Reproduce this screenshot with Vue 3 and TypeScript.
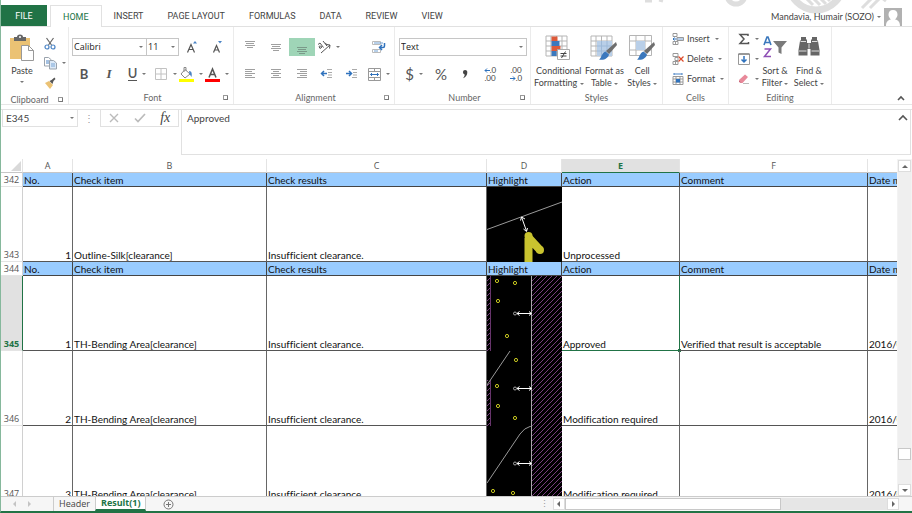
<script setup lang="ts">
import { ref } from 'vue'

interface SheetRow {
  num: number
  kind: 'head' | 'data'
  cells: string[]
  art?: 'silk' | 'bendA' | 'bendB' | 'bendC'
}

const tabs: string[] = ['HOME', 'INSERT', 'PAGE LAYOUT', 'FORMULAS', 'DATA', 'REVIEW', 'VIEW']
const activeTab = ref('HOME')
const columns: string[] = ['A', 'B', 'C', 'D', 'E', 'F', '']
const heads: string[] = ['No.', 'Check item', 'Check results', 'Highlight', 'Action', 'Comment', 'Date modified']

const rows: SheetRow[] = [
  { num: 342, kind: 'head', cells: heads },
  { num: 343, kind: 'data', art: 'silk', cells: ['1', 'Outline-Silk[clearance]', 'Insufficient clearance.', '', 'Unprocessed', '', ''] },
  { num: 344, kind: 'head', cells: heads },
  { num: 345, kind: 'data', art: 'bendA', cells: ['1', 'TH-Bending Area[clearance]', 'Insufficient clearance.', '', 'Approved', 'Verified that result is acceptable', '2016/09/12'] },
  { num: 346, kind: 'data', art: 'bendB', cells: ['2', 'TH-Bending Area[clearance]', 'Insufficient clearance.', '', 'Modification required', '', '2016/09/12'] },
  { num: 347, kind: 'data', art: 'bendC', cells: ['3', 'TH-Bending Area[clearance]', 'Insufficient clearance.', '', 'Modification required', '', '2016/09/12'] },
]

const activeRow = 345
const activeCol = 4
const formula = ref('Approved')
const cellName = ref('E345')
const fontName = ref('Calibri')
const fontSize = ref('11')
const numberFormat = ref('Text')

const vias: Record<string, number[][]> = {
  bendA: [[10, 5], [28, 7], [11, 25], [20, 60]],
  bendB: [[29, 9], [10, 35], [11, 55], [28, 67]],
  bendC: [[6, 65], [26, 67]],
}
</script>

<template>
  <div class="app">
    <svg class="defs" width="0" height="0" aria-hidden="true">
      <defs>
        <pattern id="hatch" width="5" height="5" patternUnits="userSpaceOnUse">
          <path d="M-1 6 6 -1M-1 1 1 -1M4 6 6 4" stroke="#86468c" stroke-width="0.9" />
        </pattern>
        <g id="grid9">
          <path d="M1 2h21v20H1zM1 7h21M1 12h21M1 17h21M6 2v20M11.500 2v20M17 2v20" fill="#fff" stroke="#b5b5b5" />
        </g>
        <g id="brush">
          <path d="M26 8l1 3-8 9-3-3z" fill="#6e6e6e" />
          <path d="M15.500 17.500l3.500 3c-1 4-5 6-10 5 3-2 2-6 6.500-8z" fill="#3b78bd" />
        </g>
      </defs>
    </svg>

    <header class="top">
      <svg class="swirl" viewBox="0 0 280 27" width="280" height="27" aria-hidden="true">
        <g fill="none" stroke="#dedede">
          <circle cx="104" cy="-5" r="9" stroke-width="5" />
          <circle cx="184" cy="-17" r="27" stroke-width="7" />
          <path d="M167 -9l14 14M174 -9l14 14M181 -9l13 13M188 -9l10 10M230 8l10-10M238 8l10-10M250 -2l4 3" stroke-width="3" />
          <path d="M13 1h7M27 0l4 1" stroke-width="3" />
        </g>
      </svg>
      <nav class="tabs">
        <button class="file">FILE</button>
        <button
          v-for="t in tabs"
          :key="t"
          class="tab"
          :class="{ on: t === activeTab }"
          @click="activeTab = t"
        >{{ t }}</button>
      </nav>
      <button class="user">
        <span>Mandavia, Humair (SOZO)</span>
        <i class="caret"></i>
        <svg width="18" height="18" viewBox="0 0 18 18">
          <path d="M0 0h18v18H0z" fill="#b1b1b1" />
          <path d="M9 2c3 0 4.500 2 4.500 4.500S11.500 12 9 12 4.500 9 4.500 6.500 6 2 9 2zM2 18c0-4 2-6 4.500-6.500h5C14 12 16 14 16 18z" fill="#fff" />
        </svg>
      </button>
    </header>

    <section class="ribbon">
      <div class="group clip">
        <div class="body cliprow">
          <button class="big paste">
            <svg width="26" height="28" viewBox="0 0 26 28">
              <path d="M1 4h20v21H1z" fill="#ebc274" />
              <path d="M5 7V3h3a3 2.500 0 0 1 6 0h3v4z" fill="#666" />
              <circle cx="11" cy="3" r="1" fill="#fff" />
              <path d="M12.500 11.500h7l5 5v10h-12z" fill="#fff" stroke="#999" />
              <path d="M19.500 11.500v5h5" fill="none" stroke="#999" />
            </svg>
            <span>Paste</span>
            <i class="caret"></i>
          </button>
          <div class="stack">
            <button class="ic" aria-label="Cut">
              <svg width="12" height="13" viewBox="0 0 12 13" fill="none">
                <path d="M2.500 1l5 7M9.500 1l-5 7" stroke="#666" stroke-width="1.200" />
                <circle cx="3" cy="10" r="2" stroke="#4a83c4" stroke-width="1.200" /><circle cx="9" cy="10" r="2" stroke="#4a83c4" stroke-width="1.200" />
              </svg>
            </button>
            <button class="ic split" aria-label="Copy">
              <svg width="13" height="14" viewBox="0 0 13 14" stroke="#9aa3ad">
                <path d="M.5 1.500h4l3 2.500v6h-7z" fill="#fff" /><path d="M2 5h3M2 7h3" stroke="#4a83c4" />
                <path d="M5.500 4.500h4l3 2.500v6h-7z" fill="#dce9f7" /><path d="M7 8h4M7 10h4" stroke="#7ba6d6" />
              </svg>
              <i class="caret"></i>
            </button>
            <button class="ic" aria-label="Format painter">
              <svg width="12" height="12" viewBox="0 0 12 12">
                <path d="M1 6l4-2 4 4-3 4z" fill="#ebc274" /><path d="M5.500 4l2-1 3-2.500L11.500 2 9.500 4l-1 3z" fill="#555" />
              </svg>
            </button>
          </div>
        </div>
        <footer><span>Clipboard</span><i class="launch"></i></footer>
      </div>

      <div class="group font">
        <div class="body">
          <div class="line">
            <label class="combo name"><input v-model="fontName" aria-label="Font" /><i class="caret"></i></label>
            <label class="combo size"><input v-model="fontSize" aria-label="Font size" /><i class="caret"></i></label>
            <button class="ic w26" aria-label="Increase font size">
              <svg width="12" height="14" viewBox="0 0 12 14"><path d="M1.500 12.500l3.500-8 3.500 8M3 9.500h4" fill="none" stroke="#555" stroke-width="1.200" /><path d="M7 3.500l2-2.500 2 2.500z" fill="#4a83c4" /></svg>
            </button>
            <button class="ic w26" aria-label="Decrease font size">
              <svg width="12" height="14" viewBox="0 0 12 14"><path d="M1.500 12.500l3-7 3 7M3 10h3.500" fill="none" stroke="#555" stroke-width="1.200" /><path d="M6 1l2 2.500L10 1z" fill="#4a83c4" /></svg>
            </button>
          </div>
          <div class="line">
            <button class="ic w24 letter bold">B</button>
            <button class="ic w26 letter ital">I</button>
            <button class="ic w30 split letter"><span class="under">U</span><i class="caret"></i></button>
            <button class="ic w26 split" aria-label="Borders">
              <svg width="14" height="14" viewBox="0 0 14 14"><path d="M1.500 1.500h11v11h-11zM7 1.500v11M1.500 7h11" fill="none" stroke="#c2c2c2" /></svg>
              <i class="caret"></i>
            </button>
            <button class="ic w26 split" aria-label="Fill colour">
              <svg width="15" height="16" viewBox="0 0 15 16"><path d="M6 3.500l5 4.500-5 4-4-4z" fill="#fff" stroke="#888" /><path d="M5 6V1.500h2V5" fill="none" stroke="#888" /><path d="M10 5c3 0 3 3 2.500 6L10.500 8z" fill="#4a83c4" /><path d="M0 13h15v3H0z" fill="#ff0" /></svg>
              <i class="caret"></i>
            </button>
            <button class="ic w26 split" aria-label="Font colour">
              <svg width="15" height="16" viewBox="0 0 15 16"><path d="M4 11.500L7.500 3l3.500 8.500M5.300 8.500h4.400" fill="none" stroke="#555" stroke-width="1.500" /><path d="M0 13h15v3H0z" fill="#f00" /></svg>
              <i class="caret"></i>
            </button>
          </div>
        </div>
        <footer><span>Font</span><i class="launch"></i></footer>
      </div>

      <div class="group align">
        <div class="body">
          <div class="line">
            <button class="ic w26" aria-label="Top align"><svg width="12" height="14" viewBox="0 0 12 14"><path d="M1 1.500h10M2 3.500h8M1 5.500h10M3 7.500h6" stroke="#a0a0a0" /></svg></button>
            <button class="ic w26" aria-label="Middle align"><svg width="12" height="14" viewBox="0 0 12 14"><path d="M1 4.500h10M2 6.500h8M1 8.500h10M3 10.500h6" stroke="#a0a0a0" /></svg></button>
            <button class="ic w26 pressed" aria-label="Bottom align"><svg width="12" height="14" viewBox="0 0 12 14"><path d="M1 7.500h10M2 9.500h8M1 11.500h10M3 13.500h6" stroke="#7a9a89" /></svg></button>
            <button class="ic w26 split" aria-label="Orientation">
              <svg width="14" height="14" viewBox="0 0 14 14" fill="none" stroke="#555"><path d="M4 13l9-8M9.500 4.500L13 5l-.5 3.500" /><path d="M1 4.500l2-1.500 3.500 4.500M2 6.500c1-1 2 0 3 .5l-2 1.500zM6 1l4 5M8 3.500c1-.5 2.500 1 1.500 2" /></svg>
              <i class="caret"></i>
            </button>
            <button class="ic wrap" aria-label="Wrap text">
              <svg width="14" height="14" viewBox="0 0 14 14" fill="none"><path d="M.5 1.500h8v3h-8zM.5 9.500h8v3h-8z" stroke="#bbb" /><path d="M2 3h9M2 11h4" stroke="#6f9fd2" /><path d="M12.500 3v3q0 1.500-1.500 1.500H8M10 5L7.500 7.500 10 10" stroke="#2f72bd" stroke-width="1.500" /></svg>
            </button>
          </div>
          <div class="line">
            <button class="ic w26" aria-label="Align left"><svg width="12" height="12" viewBox="0 0 12 12"><path d="M1 1.500h10M1 3.500h7M1 5.500h10M1 7.500h7M1 9.500h10" stroke="#a0a0a0" /></svg></button>
            <button class="ic w26" aria-label="Centre"><svg width="12" height="12" viewBox="0 0 12 12"><path d="M1 1.500h10M3 3.500h6M1 5.500h10M3 7.500h6M1 9.500h10" stroke="#a0a0a0" /></svg></button>
            <button class="ic w26" aria-label="Align right"><svg width="12" height="12" viewBox="0 0 12 12"><path d="M1 1.500h10M4 3.500h7M1 5.500h10M4 7.500h7M1 9.500h10" stroke="#a0a0a0" /></svg></button>
            <button class="ic w24" aria-label="Decrease indent"><svg width="13" height="12" viewBox="0 0 13 12" fill="none"><path d="M7 1.500h5M8 4.500h4M8 7h4M7 9.500h5" stroke="#aaa" /><path d="M7 5.500H1.500M4 3L1.500 5.500 4 8" stroke="#2f72bd" stroke-width="1.500" /></svg></button>
            <button class="ic w26" aria-label="Increase indent"><svg width="13" height="12" viewBox="0 0 13 12" fill="none"><path d="M7 1.500h5M8 4.500h4M8 7h4M7 9.500h5" stroke="#aaa" /><path d="M1 5.500h5M4 3l2.500 2.500L4 8" stroke="#2f72bd" stroke-width="1.500" /></svg></button>
            <button class="ic w30 split" aria-label="Merge">
              <svg width="13" height="13" viewBox="0 0 13 13" fill="none"><path d="M.5.5h12v12H.5zM.5 3.500h12M.5 9.500h12M6.500.5v3M6.500 9.500v3" stroke="#999" /><path d="M2.500 6.500h8M4 5L2.500 6.500 4 8M9 5l1.500 1.500L9 8" stroke="#2f72bd" /></svg>
              <i class="caret"></i>
            </button>
          </div>
        </div>
        <footer><span>Alignment</span><i class="launch"></i></footer>
      </div>

      <div class="group number">
        <div class="body">
          <div class="line">
            <div class="pick">
              <select v-model="numberFormat" aria-label="Number format"><option>Text</option><option>General</option></select>
              <i class="caret"></i>
            </div>
          </div>
          <div class="line">
            <button class="ic w30 split letter light"><span>$</span><i class="caret"></i></button>
            <button class="ic w24 letter light">%</button>
            <button class="ic w24 letter comma" aria-label="Comma style"><svg width="6" height="10" viewBox="0 0 6 10"><path d="M3 1a2.300 2.300 0 0 1 2.300 2.500C5.300 6 4 8 1 9.200 2.500 7.500 2.800 6.500 2.600 5.500A2.300 2.300 0 0 1 3 1z" fill="#444" /></svg></button>
            <button class="ic w26 dec" aria-label="Increase decimal">
              <span><svg width="6" height="5" viewBox="0 0 6 5"><path d="M6 2.500H1M3 .5l-2 2 2 2" fill="none" stroke="#2f72bd" /></svg>.0</span><span>.00</span>
            </button>
            <button class="ic w26 dec" aria-label="Decrease decimal">
              <span>.00</span><span><svg width="6" height="5" viewBox="0 0 6 5"><path d="M0 2.500h5M3 .5l2 2-2 2" fill="none" stroke="#2f72bd" /></svg>.0</span>
            </button>
          </div>
        </div>
        <footer><span>Number</span><i class="launch"></i></footer>
      </div>

      <div class="group styles">
        <div class="body bigs">
          <button class="big cond">
            <svg width="28" height="28" viewBox="0 0 28 28">
              <use href="#grid9" /><path d="M6.500 2.500h6v4.500h-6zM6.500 12h9v5h-9z" fill="#dd5a3a" /><path d="M6.500 7h8v5h-8zM6.500 17h5v5h-5z" fill="#3b78bd" />
              <path d="M12.500 15.500h12v10h-12z" fill="#fff" stroke="#aaa" /><path d="M15.500 19.500h6M15.500 22h6M20.500 17.500l-4 6.500" stroke="#444" />
            </svg>
            <span>Conditional</span><span>Formatting <i class="caret"></i></span>
          </button>
          <button class="big fmt">
            <svg width="28" height="28" viewBox="0 0 28 28"><use href="#grid9" /><path d="M7 7h15v15H7z" fill="#b9cfe8" /><path d="M7 12h15M7 17h15M11.500 7v15M17 7v15" stroke="#9db9d8" /><use href="#brush" /></svg>
            <span>Format as</span><span>Table <i class="caret"></i></span>
          </button>
          <button class="big cell">
            <svg width="28" height="28" viewBox="0 0 28 28"><path d="M1.500 1.500h22v20h-22zM1.500 7h22M1.500 16h22M8 1.500v20M17 1.500v20" fill="#fff" stroke="#b5b5b5" /><path d="M8 7h9v9H8z" fill="#b9cfe8" /><use href="#brush" /></svg>
            <span>Cell</span><span>Styles <i class="caret"></i></span>
          </button>
        </div>
        <footer><span>Styles</span></footer>
      </div>

      <div class="group cells">
        <div class="body list">
          <button class="item">
            <svg width="12" height="12" viewBox="0 0 12 12"><path d="M1 .5h4v3H1zM1 8.500h5v3H1zM3.500 8.500v3" fill="#fff" stroke="#999" /><path d="M5 4.500h6.500v3H5z" fill="#b9cfe8" stroke="#999" /><path d="M4.500 6H1M2.500 4.500L1 6l1.500 1.500" fill="none" stroke="#2f72bd" /></svg>
            <span>Insert</span><i class="caret"></i>
          </button>
          <button class="item">
            <svg width="12" height="12" viewBox="0 0 12 12"><path d="M1 .5h5v3H1zM1 8.500h5v3H1zM3.500 8.500v3M3 4.500h3v3H3z" fill="#fff" stroke="#999" /><path d="M6.500 3.500l5 5M11.500 3.500l-5 5" stroke="#dd4a2a" stroke-width="1.200" /></svg>
            <span>Delete</span><i class="caret"></i>
          </button>
          <button class="item">
            <svg width="12" height="12" viewBox="0 0 12 12"><path d="M1 3.500h10v8H1zM1 6h10M1 9h10M4 3.500v8M8 3.500v8" fill="#fff" stroke="#999" /><path d="M4 6h4v3.500H4z" fill="#2f72bd" /><path d="M2 1h8M2 0v2M10 0v2" stroke="#4a83c4" /></svg>
            <span>Format</span><i class="caret"></i>
          </button>
        </div>
        <footer><span>Cells</span></footer>
      </div>

      <div class="group editing">
        <div class="body edit">
          <div class="stack">
            <button class="ic split" aria-label="Sum"><svg width="12" height="12" viewBox="0 0 12 12"><path d="M10 3V1.500H2L6 6l-4 4.500h8.500V9" fill="none" stroke="#555" stroke-width="1.500" /></svg><i class="caret"></i></button>
            <button class="ic split" aria-label="Fill"><svg width="12" height="12" viewBox="0 0 12 12" fill="none"><path d="M.5 1h11v10.500H.5z" stroke="#999" /><path d="M.5 1h11" stroke="#666" /><path d="M6 3v6M3.500 6.500L6 9l2.500-2.500" stroke="#2f72bd" stroke-width="1.500" /></svg><i class="caret"></i></button>
            <button class="ic split" aria-label="Clear"><svg width="12" height="12" viewBox="0 0 12 12"><path d="M1 7l6-5.500 3 2.500-5.500 6H3z" fill="#e8899a" /><path d="M1 7l2.500 3H3L1 9z" fill="#c96478" /><path d="M5 10.500h6" stroke="#bbb" /></svg><i class="caret"></i></button>
          </div>
          <button class="big sort">
            <svg width="26" height="28" viewBox="0 0 26 28" fill="none"><path d="M2 11L5 3h1l3 8M3.200 8.500h4.600" stroke="#3b78bd" stroke-width="1.600" /><path d="M2.500 15h6l-6 7.500h6.500" stroke="#8e4fb5" stroke-width="1.500" /><path d="M11 7h14l-5.500 6.500V20l-3-1.500v-5z" fill="#7a7a7a" /></svg>
            <span>Sort &amp;</span><span>Filter <i class="caret"></i></span>
          </button>
          <button class="big find">
            <svg width="24" height="28" viewBox="0 0 24 28" fill="#666"><path d="M4 3h5v2l1 1v3h4V6l1-1V3h5v3l1 1 1.500 9v5.500h-9V15h-3v6.500h-9V16L3 7l1-1z" /><path d="M2 17h7.500M14.500 17H22M3.500 7.500H9M15 7.500h5.500M12 9.500v5" stroke="#ddd" fill="none" /></svg>
            <span>Find &amp;</span><span>Select <i class="caret"></i></span>
          </button>
        </div>
        <footer><span>Editing</span></footer>
      </div>
      <button class="collapse" aria-label="Collapse ribbon"><svg width="8" height="6" viewBox="0 0 8 6"><path d="M1 5l3-3 3 3" fill="none" stroke="#555" stroke-width="1.600" /></svg></button>
    </section>

    <section class="fbar">
      <label class="namebox"><input v-model="cellName" aria-label="Name box" /><i class="caret"></i></label>
      <span class="dots">⋮</span>
      <div class="fx">
        <button aria-label="Cancel"><svg width="10" height="10" viewBox="0 0 10 10"><path d="M1 1l8 8M9 1L1 9" stroke="#bbb" stroke-width="1.400" /></svg></button>
        <button aria-label="Enter"><svg width="12" height="10" viewBox="0 0 12 10"><path d="M1 5.500L4 8.500 11 1" fill="none" stroke="#bbb" stroke-width="1.700" /></svg></button>
        <button class="fxl">fx</button>
      </div>
      <div class="formula">
        <textarea v-model="formula" aria-label="Formula"></textarea>
        <button aria-label="Collapse formula bar"><svg width="10" height="7" viewBox="0 0 10 7"><path d="M1 6l4-4 4 4" fill="none" stroke="#555" stroke-width="1.600" /></svg></button>
      </div>
    </section>

    <main class="sheet">
      <div class="view">
        <table>
          <colgroup>
            <col class="c0" /><col class="ca" /><col class="cb" /><col class="cc" /><col class="cd" /><col class="ce" /><col class="cf" /><col />
          </colgroup>
          <thead>
            <tr>
              <th class="corner"><svg width="10" height="10" viewBox="0 0 10 10"><path d="M10 0v10H0z" fill="#d9d9d9" /></svg></th>
              <th v-for="(c, i) in columns" :key="i" :class="{ cur: i === activeCol }">{{ c }}</th>
            </tr>
          </thead>
          <tbody>
            <tr v-for="r in rows" :key="r.num" :class="r.kind">
              <th :class="{ cur: r.num === activeRow }">{{ r.num }}</th>
              <td v-for="(c, i) in r.cells" :key="i" :class="{ pic: i === 3 && r.art, sel: i === activeCol && r.num === activeRow, num: i === 0 && r.kind === 'data' }">
                <svg v-if="i === 3 && r.art" class="art" viewBox="0 0 75 75" fill="none">
                  <path d="M0 0h75v75H0z" fill="#000" />
                  <template v-if="r.art === 'silk'">
                    <path d="M0 42.500L75 15" stroke="#9a9a9a" />
                    <path d="M41.500 75V51M42 51l11 12" stroke="#c9c32f" stroke-width="8" />
                    <circle cx="41.500" cy="49" r="4" fill="#c9c32f" /><circle cx="53" cy="63" r="4" fill="#c9c32f" />
                    <path d="M34.500 30l5 14M33.500 33.500l1-3.500 3.500 2M36.500 42l3 2.500 1-3.500" stroke="#fff" />
                  </template>
                  <template v-else>
                    <path d="M45 0h30v75H45z" fill="url(#hatch)" />
                    <path v-if="r.art === 'bendA'" d="M0 0h4v75H0z" fill="url(#hatch)" />
                    <path v-if="r.art === 'bendB'" d="M0 29h4v46H0z" fill="url(#hatch)" />
                    <path v-if="r.art === 'bendA'" d="M3.500 0v75" stroke="#67346b" />
                    <path v-if="r.art === 'bendB'" d="M3.500 29v46" stroke="#67346b" />
                    <path v-if="r.art === 'bendB'" d="M0 34L23 0" stroke="#999" />
                    <path v-if="r.art === 'bendC'" d="M0 57L33 8q4-6 11-8" stroke="#999" />
                    <path d="M44.500 0v75" stroke="#aaa" />
                    <circle v-for="(v, k) in vias[r.art!]" :key="k" :cx="v[0]" :cy="v[1]" r="1.600" stroke="#c8c820" />
                    <circle cx="28" cy="37.500" r="1.500" stroke="#ccc" stroke-width="0.800" />
                    <path d="M30 37.500h14M32.500 35.500l-2.500 2 2.500 2M42 35.500l2.500 2-2.500 2" stroke="#fff" />
                  </template>
                </svg>
                <template v-else>{{ c }}</template>
                <i v-if="i === activeCol && r.num === activeRow" class="handle"></i>
              </td>
            </tr>
          </tbody>
        </table>
      </div>
      <div class="vscroll">
        <button aria-label="Scroll up"><i class="tri up"></i></button>
        <div class="vtrack"><div class="vthumb"></div></div>
        <button aria-label="Scroll down"><i class="tri down"></i></button>
      </div>
    </main>

    <footer class="bottom">
      <div class="navs"><button aria-label="Previous sheet"><i class="tri left dim"></i></button><button aria-label="Next sheet"><i class="tri right dim"></i></button></div>
      <button class="stab">Header</button>
      <button class="stab on">Result(1)</button>
      <button class="add" aria-label="New sheet"><svg width="11" height="11" viewBox="0 0 11 11"><circle cx="5.500" cy="5.500" r="4.500" fill="none" stroke="#777" /><path d="M3 5.500h5M5.500 3v5" stroke="#777" /></svg></button>
      <span class="dots hdots">⋮</span>
      <div class="hscroll">
        <button aria-label="Scroll left"><i class="tri left"></i></button>
        <div class="htrack"><div class="hthumb"></div></div>
        <button aria-label="Scroll right"><i class="tri right"></i></button>
      </div>
    </footer>
  </div>
</template>

<style>
body { margin: 0; }
</style>

<style scoped>
* { box-sizing: border-box; }
.app { height: 100vh; display: flex; flex-direction: column; overflow: hidden; background: #fff; color: #444; font: 9px/12px Lato, "Open Sans", sans-serif; font-variant-ligatures: none; border-left: 1px solid #86b89c; border-bottom: 2px solid #217346; }
.defs { position: absolute; }
button, input, select, textarea { font: inherit; color: inherit; background: none; border: 0; padding: 0; margin: 0; outline: 0; min-width: 0; }
button { display: flex; align-items: center; justify-content: center; }
svg { display: block; flex: none; }
.caret { display: inline-block; flex: none; width: 0; height: 0; border: 2px solid transparent; border-top-color: #777; border-bottom: 0; vertical-align: middle; }

.top { position: relative; flex: none; height: 27px; display: flex; align-items: flex-end; justify-content: space-between; border-bottom: 1px solid #e1e1e1; }
.swirl { position: absolute; top: 0; right: 0; }
.tabs { display: flex; align-items: flex-end; font-family: Roboto, Lato, sans-serif; }
.tabs button { height: 21px; padding: 0 12px; }
.tabs .file { background: #217346; color: #fff; width: 46px; margin-right: 3px; }
.tabs .tab.on { color: #217346; border: 1px solid #e1e1e1; border-bottom: 0; background: #fff; height: 22px; margin-bottom: -1px; }
.user { position: relative; gap: 3px; height: 19px; padding-right: 10px; }

.ribbon { flex: none; height: 78px; display: flex; border-bottom: 1px solid #e6e6e6; }
.group { display: flex; flex-direction: column; border-right: 1px solid #ebebeb; flex: none; }
.group .body { flex: 1; }
.group footer { position: relative; height: 12px; text-align: center; color: #666; line-height: 12px; }
.launch { position: absolute; right: 5px; bottom: 4px; width: 5px; height: 5px; border-left: 1px solid #999; border-top: 1px solid #999; }
.launch::after { content: ""; position: absolute; right: 0; bottom: 0; width: 3px; height: 3px; border-right: 1px solid #777; border-bottom: 1px solid #777; }
.clip { width: 68px; }
.clip footer { padding-right: 10px; }
.font { width: 165px; padding-left: 3px; }
.align { width: 161px; padding-left: 3px; }
.number { width: 136px; padding-left: 4px; }
.styles { width: 132px; }
.cells { width: 66px; }
.editing { width: 103px; }
.line { display: flex; height: 26px; align-items: center; }
.line:first-child { height: 28px; margin-top: 6px; }
.ic { height: 18px; }
.w24 { width: 24px; } .w26 { width: 26px; } .w30 { width: 30px; }
.split { gap: 5px; }
.letter { font-size: 13px; color: #555; }
.bold { font-weight: 700; }
.ital { font: italic 700 13px "Liberation Serif", serif; }
.under { border-bottom: 1px solid #555; line-height: 13px; font-weight: 600; }
.light { font-size: 15px; }
.pressed { background: #9fd5b7; }
.wrap { margin-left: 25px; width: 26px; }
.dec { flex-direction: column; font-size: 8px; line-height: 8px; }
.dec span { display: flex; align-items: center; height: 8px; }
.combo, .pick, .namebox { display: flex; align-items: center; border: 1px solid #c6c6c6; height: 18px; padding-right: 3px; color: #222; font-size: 9px; font-family: "Open Sans", sans-serif; }
.combo input { flex: 1; padding-left: 1px; }
.combo.name { width: 75px; } .combo.size { width: 33px; margin-left: -1px; }
.pick { width: 128px; }
.pick select { appearance: none; flex: 1; height: 16px; padding-left: 1px; }
.big { flex-direction: column; justify-content: flex-start; }
.big span { line-height: 12px; white-space: nowrap; }
.bigs { display: flex; padding-top: 7px; }
.cond { width: 56px; } .fmt { width: 36px; } .cell { width: 40px; }
.bigs .big svg, .edit .big svg { margin-bottom: 3px; }
.cliprow { display: flex; padding: 7px 0 0 8px; }
.paste svg { margin-bottom: 3px; } .paste .caret { margin-top: 4px; }
.cliprow .stack { margin-left: 9px; }
.stack { display: flex; flex-direction: column; align-items: flex-start; }
.stack .ic { height: 20px; margin-top: -1px; margin-bottom: 1px; }
.list { padding: 2px 0 0 9px; }
.item { height: 20px; gap: 3px; }
.item .caret { margin-left: 2px; }
.edit { display: flex; padding-top: 3px; }
.edit .stack { margin-left: 9px; width: 20px; }
.edit .big { padding-top: 4px; width: 34px; }
.collapse { margin-left: auto; align-self: flex-end; width: 22px; height: 12px; }

.fbar { flex: none; margin-top: 4px; padding: 0 1px; display: flex; height: 50px; align-items: flex-start; border-top: 1px solid #e1e1e1; font-size: 10px; }
.namebox, .fx { height: 17px; border: 1px solid #e1e1e1; border-top: 0; }
.namebox { width: 76px; flex: none; padding-left: 3px; color: #444; font: 10px/12px Lato, sans-serif; }
.namebox input { flex: 1; }
.dots { width: 22px; text-align: center; color: #999; line-height: 16px; flex: none; }
.fx { display: flex; width: 79px; flex: none; }
.fx button { flex: 1; }
.fx .fxl { font: italic 14px "Liberation Serif", serif; }
.formula { flex: 1; margin-left: 2px; height: 45px; display: flex; align-items: flex-start; border: 1px solid #e1e1e1; border-top: 0; }
.formula textarea { flex: 1; height: 42px; resize: none; padding: 2px 5px; display: block; }
.formula button { width: 14px; height: 15px; }

.sheet { flex: 1; min-height: 0; display: flex; }
.view { flex: 1; overflow: hidden; }
table { table-layout: fixed; width: 100%; min-width: 980px; border-collapse: separate; border-spacing: 0; color: #111; font-size: 10px; }
.c0 { width: 22px; } .ca { width: 50px; } .cb { width: 194px; } .cc { width: 220px; } .cd { width: 75px; } .ce { width: 118px; } .cf { width: 188px; }
th { font: 9px/12px "Open Sans", sans-serif; color: #555; padding: 0; }
thead th { height: 14px; border-right: 1px solid #e4e4e4; border-bottom: 1px solid #c6c6c6; }
.corner svg { margin: 1px 1px 0 auto; }
thead th.cur { background: #e1e1e1; color: #217346; font-weight: 700; border-bottom-color: #217346; }
tbody th { vertical-align: bottom; border-right: 1px solid #d0d0d0; border-bottom: 1px solid #e4e4e4; }
tbody th.cur { background: #e1e1e1; color: #217346; font-weight: 700; border-right-color: #217346; }
td { position: relative; padding: 0 1px; vertical-align: bottom; white-space: nowrap; border-right: 1px solid #666; border-bottom: 1px solid #555; line-height: 12px; }
.head td { background: #99ccff; border-color: #444; }
.head td, .head th { height: 14px; }
.data td, .data th { height: 75px; }
td.num { text-align: right; padding-right: 1px; }
td.pic { padding: 0; border: 0; line-height: 0; }
.art { width: 75px; height: 75px; }
td.sel { border-color: #217346; }
.handle { position: absolute; right: -2px; bottom: -2px; width: 3px; height: 3px; background: #217346; }
.vscroll { width: 15px; flex: none; display: flex; flex-direction: column; background: #f3f3f3; padding: 1px 1px 0; }
.vscroll button { height: 12px; background: #fff; border: 1px solid #ddd; }
.vtrack { flex: 1; display: flex; flex-direction: column; justify-content: flex-end; padding-bottom: 24px; background: #efefef; }
.vthumb { height: 12px; background: #fff; border: 1px solid #c8c8c8; }
.tri { width: 0; height: 0; border: 3px solid transparent; }
.up { border-top: 0; border-bottom-color: #666; } .down { border-bottom: 0; border-top-color: #666; }
.left { border-left: 0; border-right-color: #666; } .right { border-right: 0; border-left-color: #666; }
.left.dim { border-right-color: #c4c4c4; } .right.dim { border-left-color: #c4c4c4; }

.bottom { flex: none; height: 15px; display: flex; align-items: center; background: #f6f6f6; border-top: 1px solid #ccc; font: 9px/12px "Open Sans", sans-serif; }
.navs { display: flex; width: 53px; border-right: 1px solid #ccc; height: 14px; padding-left: 12px; gap: 12px; }
.stab { height: 14px; padding: 0 5px; }
.stab.on { background: #fff; color: #217346; font-weight: 700; border: 1px solid #ccc; border-width: 0 1px; border-bottom: 2px solid #217346; }
.add { margin-left: 17px; }
.hdots { margin-left: auto; width: 16px; line-height: 14px; }
.hscroll { display: flex; flex: none; width: 38%; height: 12px; margin-right: 13px; }
.hscroll button { width: 12px; border: 1px solid #ddd; background: #fff; }
.htrack { flex: 1; background: #e6e6e6; }
.hthumb { width: 67%; height: 12px; background: #fff; border: 1px solid #c8c8c8; }
</style>
